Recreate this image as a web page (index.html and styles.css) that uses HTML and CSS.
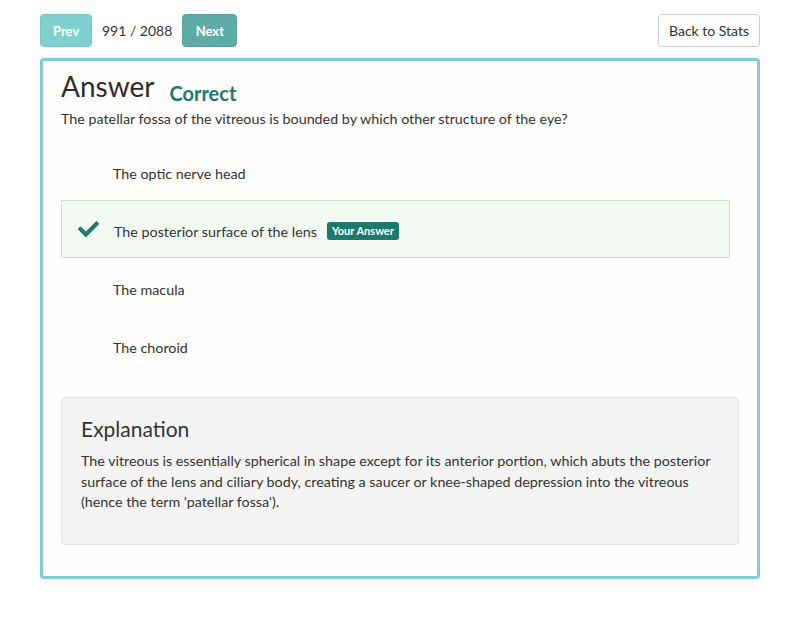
FILE: index.html
```html
<!DOCTYPE html>
<html>
<head>
<meta charset="utf-8">
<link rel="stylesheet" href="styles.css">
</head>
<body>
<div class="page">
  <div class="toolbar">
    <div class="nav">
      <button class="btn btn-prev">Prev</button>
      <span class="counter">991 / 2088</span>
      <button class="btn btn-next">Next</button>
    </div>
    <button class="btn btn-back">Back to Stats</button>
  </div>
  <div class="card">
    <div class="title-row">
      <h1 class="title">Answer</h1>
      <span class="status">Correct</span>
    </div>
    <p class="question">The patellar fossa of the vitreous is bounded by which other structure of the eye?</p>
    <ul class="options">
      <li class="option">The optic nerve head</li>
      <li class="option selected">
        <svg class="check" viewBox="0 0 512 400" aria-hidden="true"><path fill="currentColor" d="M173.898 375.404l-166.4-166.4c-9.997-9.997-9.997-26.206 0-36.204l36.203-36.204c9.997-9.998 26.207-9.998 36.204 0L192 248.69 432.095 8.596c9.997-9.997 26.207-9.997 36.204 0l36.203 36.204c9.997 9.997 9.997 26.206 0 36.204l-294.4 294.401c-9.998 9.997-26.207 9.997-36.204-.001z"/></svg>
        <span>The posterior surface of the lens</span>
        <span class="badge">Your Answer</span>
      </li>
      <li class="option">The macula</li>
      <li class="option">The choroid</li>
    </ul>
    <div class="explanation">
      <h2 class="exp-title">Explanation</h2>
      <p class="exp-text">The vitreous is essentially spherical in shape except for its anterior portion, which abuts the posterior surface of the lens and ciliary body, creating a saucer or knee-shaped depression into the vitreous (hence the term 'patellar fossa').</p>
    </div>
  </div>
</div>
</body>
</html>
```

FILE: styles.css
```css
* { box-sizing: border-box; }
html, body { margin: 0; padding: 0; background: #ffffff; }
body {
  font-family: Lato, "Open Sans", Arial, sans-serif;
  color: #333333;
  font-size: 14.3px;
}
.page { padding: 14px 40px 0 40px; }
.toolbar {
  display: flex;
  justify-content: space-between;
  align-items: center;
}
.nav { display: flex; align-items: center; gap: 10px; }
.btn {
  font-family: inherit;
  height: 33px;
  border-radius: 4px;
  border: 1px solid transparent;
  font-size: 13px;
  cursor: pointer;
  padding: 0 12px;
}
.btn-prev {
  width: 52px;
  background: #7fd0cf;
  border-color: #74c6c5;
  color: #ffffff;
  font-weight: bold;
}
.btn-next {
  width: 55px;
  background: #5eaca8;
  border-color: #559f9b;
  color: #ffffff;
  font-weight: bold;
}
.counter { font-size: 14px; color: #333; }
.btn-back {
  width: 102px;
  background: #ffffff;
  border-color: #cccccc;
  color: #333333;
  font-size: 14px;
  padding: 0;
}
.card {
  margin-top: 11px;
  border: 3px solid #7ccfce;
  border-radius: 4px;
  background: #fffefc;
  padding: 5px 18px 31px 18px;
}
.title-row { display: flex; align-items: baseline; }
.title {
  margin: 0;
  font-size: 28px;
  font-weight: normal;
  line-height: 40px;
  color: #2d2d2d;
}
.status {
  margin-left: 15px;
  font-size: 20px;
  font-weight: bold;
  color: #1b7a6a;
  position: relative;
  top: 4px;
}
.question { margin: 3px 0 0 0; line-height: 20px; }
.options {
  list-style: none;
  margin: 13px 9px 0 0;
  padding: 0;
}
.option {
  display: flex;
  align-items: center;
  height: 58px;
  padding-top: 4px;
  padding-left: 51px;
  border: 1px solid transparent;
}
.option.selected {
  background: #f3faf3;
  border-color: #c6e5c2;
  padding-left: 16px;
}
.check {
  width: 21px;
  height: 17px;
  color: #1b7a6a;
  margin-right: 15px;
  margin-top: -4px;
}
.badge {
  margin-left: 10px;
  background: #1b7a6a;
  color: #ffffff;
  font-size: 11px;
  font-weight: bold;
  padding: 0 5px;
  height: 18px;
  line-height: 18px;
  border-radius: 3px;
}
.explanation {
  margin-top: 23px;
  background: #f4f4f4;
  border: 1px solid #e2e2e2;
  border-radius: 4px;
  padding: 16px 19px 31px 19px;
}
.exp-title {
  margin: 0;
  font-size: 21px;
  font-weight: normal;
  line-height: 30px;
  color: #333;
}
.exp-text {
  margin: 7px 0 0 0;
  line-height: 20.5px;
}
```
